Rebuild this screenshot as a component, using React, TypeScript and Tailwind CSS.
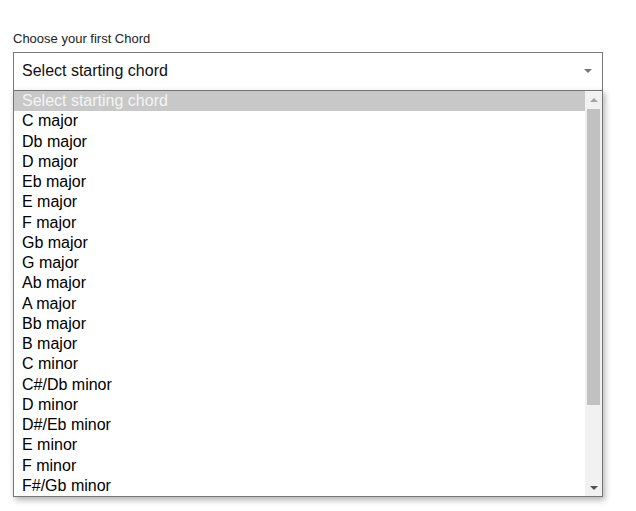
import React from 'react';

const chords = [
  'Select starting chord',
  'C major',
  'Db major',
  'D major',
  'Eb major',
  'E major',
  'F major',
  'Gb major',
  'G major',
  'Ab major',
  'A major',
  'Bb major',
  'B major',
  'C minor',
  'C#/Db minor',
  'D minor',
  'D#/Eb minor',
  'E minor',
  'F minor',
  'F#/Gb minor',
];

const Triangle: React.FC<{ up?: boolean; color: string }> = ({ up, color }) => (
  <svg width="8" height="4" viewBox="0 0 8 4">
    <polygon points={up ? '0,4 8,4 4,0' : '0,0 8,0 4,4'} fill={color} />
  </svg>
);

export default function App() {
  return (
    <div className="min-h-screen bg-white pl-[13px] pt-[31px] font-['Liberation_Sans',Arial,sans-serif]">
      <label className="block text-[13px] leading-[15px] text-[#222] mb-[6px]">Choose your first Chord</label>

      <div className="relative w-[590px]">
        {/* closed select */}
        <div className="h-[39px] border border-[#7a7a7a] bg-white flex items-center pl-[8px] pr-[10px] pb-[2px] text-[16px] text-[#111]">
          <span className="flex-1">Select starting chord</span>
          <Triangle color="#777" />
        </div>

        {/* open option list */}
        <div className="absolute left-0 top-[38px] w-[590px] h-[407px] border border-[#767676] bg-white shadow-[2px_3px_6px_rgba(0,0,0,0.3)] flex overflow-hidden">
          <ul className="flex-1 text-[16px] text-black">
            {chords.map((c, i) => (
              <li
                key={c}
                className={`h-[20.25px] leading-[20.25px] pl-[8px] whitespace-nowrap ${
                  i === 0 ? 'bg-[#c8c8c8] text-[#f4f4f4]' : ''
                }`}
              >
                {c}
              </li>
            ))}
          </ul>

          {/* scrollbar */}
          <div className="w-[17px] bg-[#f1f1f1] flex flex-col">
            <div className="h-[17px] flex items-center justify-center">
              <Triangle up color="#a3a3a3" />
            </div>
            <div className="mt-[1px] mx-[2px] h-[296px] bg-[#c1c1c1]" />
            <div className="flex-1" />
            <div className="h-[17px] flex items-center justify-center">
              <Triangle color="#505050" />
            </div>
          </div>
        </div>
      </div>
    </div>
  );
}
